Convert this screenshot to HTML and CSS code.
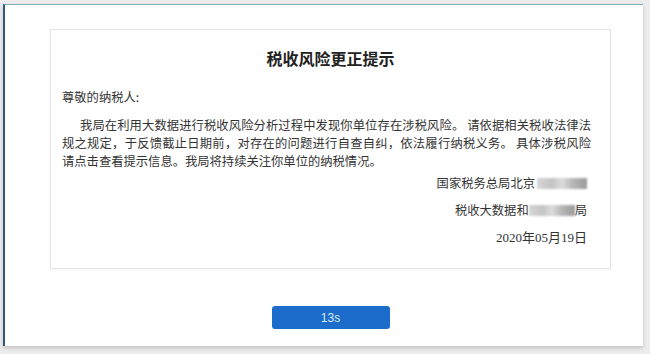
FILE: index.html
```html
<!DOCTYPE html>
<html lang="zh-CN">
<head>
    <meta charset="UTF-8">
    <meta name="viewport" content="width=device-width, initial-scale=1.0">
    <title>税收风险更正提示</title>
    <link rel="stylesheet" href="styles.css">
</head>
<body>
    <div class="dialog">
        <div class="notice">
            <h1 class="notice-title">税收风险更正提示</h1>
            <p class="greeting">尊敬的纳税人:</p>
            <p class="content">我局在利用大数据进行税收风险分析过程中发现你单位存在涉税风险。 请依据相关税收法律法规之规定，于反馈截止日期前，对存在的问题进行自查自纠，依法履行纳税义务。 具体涉税风险请点击查看提示信息。我局将持续关注你单位的纳税情况。</p>
            <div class="sign">
                <p>国家税务总局北京<span class="masked masked-long"></span></p>
                <p>税收大数据和<span class="masked"></span>局</p>
                <p class="date">2020年05月19日</p>
            </div>
        </div>
        <div class="actions">
            <button class="btn-confirm" id="countdown">13s</button>
        </div>
    </div>
</body>
</html>
```

FILE: styles.css
```css
body {
    margin: 0;
    background: #ececec;
    font-family: "Noto Sans CJK SC", "Liberation Sans", sans-serif;
    color: #333;
}
.dialog {
    margin: 4px 7px 8px 3px;
    height: 342px;
    box-sizing: border-box;
    background: #fff;
    border-top: 1px solid #7fb0c0;
    border-left: 2px solid #34577d;
    box-shadow: 0 2px 4px rgba(0, 0, 0, 0.18);
    padding: 24px 32px 0 45px;
}
.notice {
    border: 1px solid #e4e4e4;
    box-shadow: 0 1px 2px rgba(0, 0, 0, 0.04);
    padding: 16px 19px 17px 11px;
    font-size: 12.3px;
}
.notice p {
    margin: 0;
}
.notice-title {
    margin: 0;
    font-size: 16px;
    line-height: 24px;
    text-align: center;
    color: #222;
    font-weight: bold;
    padding-left: 8px;
}
.greeting {
    margin-top: 18px !important;
    line-height: 18px;
}
.content {
    margin-top: 10px !important;
    line-height: 18px;
    text-indent: 18px;
    text-align: justify;
}
.sign {
    text-align: right;
    line-height: 27px;
    padding-right: 4px;
}
.date {
    font-family: "Liberation Serif", "Noto Sans CJK SC", serif;
    font-size: 13px;
}
.masked {
    display: inline-block;
    width: 46px;
    height: 11px;
    vertical-align: -1px;
    background: linear-gradient(90deg, #d6d6d6, #c4c4c4 30%, #dcdcdc 50%, #b8b8b8 70%, #9a9a9a);
    filter: blur(1.2px);
}
.masked-long {
    width: 50px;
    margin-left: 2px;
}
.actions {
    display: flex;
    justify-content: center;
    padding-top: 37px;
}
.btn-confirm {
    width: 118px;
    height: 23px;
    border: none;
    border-radius: 3px;
    background: #1b6ccb;
    color: #dde9f7;
    font-family: "Liberation Sans", sans-serif;
    font-size: 12px;
}
```
